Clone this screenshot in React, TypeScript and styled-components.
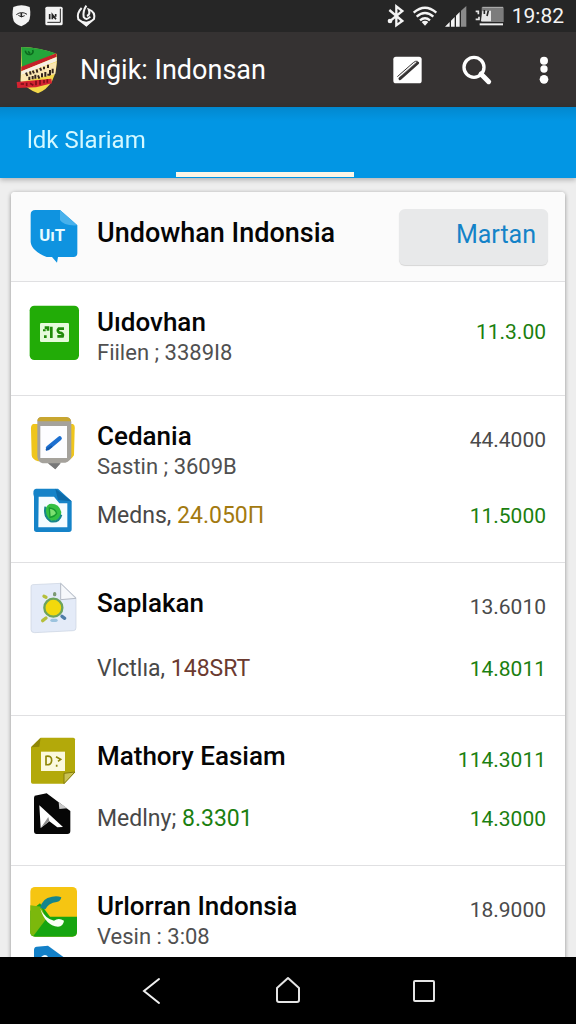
import React from "react";
import styled, { createGlobalStyle } from "styled-components";

const GlobalStyle = createGlobalStyle`
  *, *::before, *::after { box-sizing: border-box; }
  body {
    margin: 0;
    background: #eeeeee;
    font-family: Roboto, "Noto Sans", sans-serif;
    color: #050505;
  }
  button { font: inherit; border: 0; padding: 0; background: none; cursor: pointer; }
  h1, h2, h3, p, ul { margin: 0; padding: 0; }
  svg { display: block; flex: none; overflow: visible; }
`;

const Screen = styled.div`
  display: flex;
  flex-direction: column;
  height: 100vh;
  overflow: hidden;
`;

const StatusBar = styled.div`
  flex: none;
  display: flex;
  justify-content: space-between;
  align-items: center;
  height: 32px;
  padding: 0 12px;
  background: #262626;
  color: #f4f4f4;
`;

const StatusGroup = styled.div<{ $gap: number }>`
  display: flex;
  align-items: center;
  gap: ${(p) => p.$gap}px;
`;

const Clock = styled.time`
  font-size: 21px;
  line-height: 32px;
`;

const AppBar = styled.header`
  flex: none;
  display: flex;
  align-items: center;
  height: 75px;
  padding-left: 16px;
  background: #353232;
  color: #ffffff;
`;

const AppTitle = styled.h1`
  flex: 1;
  margin-left: 22px;
  font-size: 27px;
  font-weight: 400;
  line-height: 32px;
  white-space: nowrap;
`;

const Actions = styled.div`
  display: flex;
  align-items: center;
`;

const IconButton = styled.button<{ $width?: number }>`
  display: flex;
  justify-content: center;
  align-items: center;
  width: ${(p) => p.$width ?? 70}px;
  height: 48px;
`;

const TabBar = styled.nav`
  flex: none;
  position: relative;
  display: grid;
  grid-template-columns: 176px 178px 1fr;
  height: 71px;
  padding-bottom: 1px;
  background: linear-gradient(#0288cf, #0296e4 14px);
  box-shadow: 0 2px 5px rgba(0, 0, 0, 0.25);
`;

const Tab = styled.a<{ $active?: boolean }>`
  padding: 17px 0 0 27px;
  border-bottom: 5px solid ${(p) => (p.$active ? "#fdf6e6" : "transparent")};
  color: #d3f8ff;
  font-size: 24px;
  line-height: 32px;
  text-decoration: none;
  white-space: nowrap;
`;

const Content = styled.main`
  flex: 1;
  min-height: 0;
  padding: 14px 11px;
  overflow-y: auto;
  scrollbar-width: none;
  background: #eeeeee;
`;

const Card = styled.section`
  border-radius: 4px;
  background: #ffffff;
  box-shadow: 0 1px 4px rgba(0, 0, 0, 0.4);
`;

const CardHeader = styled.div`
  display: flex;
  align-items: center;
  gap: 17px;
  height: 89px;
  padding: 0 17px 0 19px;
  border-radius: 4px 4px 0 0;
  background: #fbfbfb;
`;

const CardTitle = styled.h2`
  flex: 1;
  padding-bottom: 8px;
  font-size: 27px;
  font-weight: 500;
  line-height: 32px;
  white-space: nowrap;
`;

const ActionButton = styled.button`
  && {
    width: 149px;
    height: 56px;
    padding: 0 12px 4px;
    border-radius: 6px;
    background: #e8e9ea;
    box-shadow: 0 1px 1px rgba(0, 0, 0, 0.15);
    color: #1483c8;
    font-size: 25px;
    text-align: right;
  }
`;

const List = styled.ul`
  list-style: none;
`;

const Row = styled.li`
  padding: 20px 19px 24px;
  border-top: 1px solid #e0e0e2;
`;

const Entry = styled.div<{ $height: number }>`
  display: flex;
  align-items: flex-start;
  gap: 17px;
  height: ${(p) => p.$height}px;
`;

const Names = styled.div`
  flex: 1;
  padding-top: 4px;
  white-space: nowrap;
`;

const Name = styled.h3`
  font-size: 26px;
  font-weight: 500;
  line-height: 32px;
`;

const Caption = styled.p`
  color: #505050;
  font-size: 22px;
  line-height: 30px;
`;

const Detail = styled.p`
  flex: 1;
  color: #484848;
  font-size: 23px;
  line-height: 48px;
  white-space: nowrap;
`;

const Amount = styled.span<{ $color: string }>`
  color: ${(p) => p.$color};
`;

const Value = styled.span<{ $color: string; $line?: number }>`
  color: ${(p) => p.$color};
  font-size: 21px;
  line-height: ${(p) => p.$line ?? 48}px;
`;

const Blank = styled.span`
  width: 50px;
`;

const SystemNav = styled.nav`
  flex: none;
  display: flex;
  justify-content: center;
  align-items: center;
  height: 67px;
  background: #000000;
`;

const GREEN = "#1b7f10";
const GREY = "#4a4a4a";

const glyph = { fontFamily: "Roboto, sans-serif", fontWeight: 700 };

const ShieldIcon = () => (
  <svg width="19" height="22" viewBox="0 0 57 66" aria-hidden="true">
    <path d="M4 6Q28-5 53 6Q58 35 50 49Q42 59 28 64Q10 58 5 48Q-1 30 4 6Z" fill="#f4f4f4" />
    <path d="M13 29Q28 17 45 28M19 31Q28 40 38 32" fill="none" stroke="#262626" strokeWidth="3" />
    <path d="M28 24V36" stroke="#262626" strokeWidth="5" />
  </svg>
);

const ChartBoxIcon = () => (
  <svg width="18" height="20" viewBox="0 0 54 60" aria-hidden="true">
    <rect x="1" y="2" width="52" height="56" rx="5" fill="#f4f4f4" />
    <path d="M7 49H46V8" fill="none" stroke="#262626" strokeWidth="3" />
    <path d="M14 24V40M22 40V26L33 40M32 24V32" stroke="#262626" strokeWidth="5" fill="none" />
  </svg>
);

const FlameIcon = () => (
  <svg width="18" height="22" viewBox="0 0 54 66" aria-hidden="true">
    <path d="M14 9Q-2 25 4 43L28 61L51 42Q56 20 35 13Q41 28 30 33" fill="none" stroke="#f4f4f4" strokeWidth="6" />
    <path d="M28 2Q17 18 20 36Q27 48 40 35" fill="none" stroke="#f4f4f4" strokeWidth="6" />
    <path d="M8 46L28 50L48 44L28 65Z" fill="#f4f4f4" />
  </svg>
);

const BluetoothIcon = () => (
  <svg width="18" height="22" viewBox="0 0 54 66" aria-hidden="true">
    <path d="M7 15L46 48L28 61V4L46 18L8 49" fill="none" stroke="#f4f4f4" strokeWidth="7" />
    <circle cx="9" cy="48" r="7" fill="#f4f4f4" />
  </svg>
);

const WifiIcon = () => (
  <svg width="24" height="19" viewBox="0 0 72 57" aria-hidden="true">
    <path d="M2 17Q36-13 70 17M11 29Q36 7 61 29M21 40Q36 27 51 40" fill="none" stroke="#f4f4f4" strokeWidth="7" />
    <path d="M26 45Q36 38 46 45L36 56Z" fill="#f4f4f4" />
  </svg>
);

const SignalIcon = () => (
  <svg width="22" height="21" viewBox="0 0 66 63" aria-hidden="true">
    <path d="M0 62L14 48V62ZM18 44L29 33V62H18ZM33 29L44 18V62H33Z" fill="#f4f4f4" />
    <path d="M48 14L64 0V62H48Z" fill="#8a8a8a" />
  </svg>
);

const BatteryIcon = () => (
  <svg width="29" height="20" viewBox="0 0 87 60" aria-hidden="true">
    <rect x="20" y="4" width="66" height="44" fill="#7c7c7c" />
    <path d="M14 55H84" stroke="#f0f0f0" strokeWidth="6" />
    <path d="M22 4H84" stroke="#b8b8b8" strokeWidth="3" />
    <path d="M2 16H10V25M2 40H12V32" fill="none" stroke="#e6e6e6" strokeWidth="5" />
    <path d="M22 14H48V46H18Z" fill="#e6e6e6" />
    <path d="M28 12V24M40 14L36 30" stroke="#262626" strokeWidth="5" />
  </svg>
);

const AppLogo = () => (
  <svg width="42" height="48" viewBox="0 0 126 144" aria-hidden="true">
    <path d="M16 3Q70 4 122 24Q126 70 108 106Q92 132 66 142Q34 130 14 104Z" fill="#f3d84a" />
    <path d="M16 3Q70 4 119 22L18 72Z" fill="#24a53a" />
    <path d="M28 14Q30 28 44 25Q54 22 50 12M36 16L42 22" fill="none" stroke="#0c6a1e" strokeWidth="5" />
    <path d="M16 62L121 22V33L16 76Z" fill="#c4202a" />
    <path d="M16 76L122 33V46L15 88Z" fill="#f7efe4" />
    <path d="M15 88L122 47L118 84L14 108Z" fill="#fbe7b2" />
    <path d="M2 108L106 98L108 112L60 124L4 126Z" fill="#d42331" />
    <path d="M30 80L34 90M42 76L44 86M50 74L54 82M62 70L64 80M72 66L76 74M84 62V70M96 56V66" stroke="#33241c" strokeWidth="6" fill="none" />
    <path d="M40 92V102M50 90V100M58 86V98M66 88L70 98M78 82V94M88 78V92M94 86H102M102 72V88M110 68V82" stroke="#33241c" strokeWidth="6" fill="none" />
    <path d="M14 114H24M32 110V120M42 112L52 118M60 104V118M72 102V116M84 102V112M94 100V110" stroke="#7c0f18" strokeWidth="5" fill="none" />
  </svg>
);

const EditIcon = () => (
  <svg width="29" height="28" viewBox="0 0 87 84" aria-hidden="true">
    <rect x="1" y="2" width="85" height="80" rx="8" fill="#ffffff" />
    <path d="M21 68L74 21" stroke="#353232" strokeWidth="9" strokeLinecap="round" />
    <path d="M13 62L62 19Q68 14 74 16" stroke="#353232" strokeWidth="3" fill="none" />
    <path d="M26 58L68 21" stroke="#a5a3a3" strokeWidth="2" />
  </svg>
);

const SearchIcon = () => (
  <svg width="30" height="30" viewBox="0 0 90 90" aria-hidden="true">
    <circle cx="36" cy="37" r="30" fill="none" stroke="#ffffff" strokeWidth="10" />
    <path d="M57 57L80 80" stroke="#ffffff" strokeWidth="15" strokeLinecap="round" />
  </svg>
);

const MoreIcon = () => (
  <svg width="10" height="28" viewBox="0 0 30 84" fill="#ffffff" aria-hidden="true">
    <circle cx="15" cy="14" r="12" />
    <circle cx="15" cy="39" r="11" />
    <circle cx="15" cy="70" r="13" />
  </svg>
);

const BubbleIcon = () => (
  <svg width="50" height="54" viewBox="0 0 150 162" aria-hidden="true">
    <path d="M16 0H90L142 46V130Q142 141 130 141H84L81 158L66 141H50Q4 122 2 96V14Q2 0 16 0Z" fill="#0f93e0" />
    <path d="M90 0L142 46Q100 48 90 30Z" fill="#48b1ec" />
    <text x="28" y="93" fontSize="50" fill="#e8fbff" style={glyph}>UıT</text>
  </svg>
);

const GreenFileIcon = () => (
  <svg width="50" height="60" viewBox="0 0 150 180" aria-hidden="true">
    <rect x="-1" y="11" width="148" height="163" rx="14" fill="#22ac07" />
    <rect x="30" y="63" width="87" height="57" rx="4" fill="#e6fbdc" />
    <path d="M44 77H54V86M43 82V88M46 100V108M64 74V108M102 80H86Q80 86 88 92Q102 94 98 103H82" fill="none" stroke="#1f8a08" strokeWidth="8" />
  </svg>
);

const TabletIcon = () => (
  <svg width="50" height="54" viewBox="0 0 150 162" aria-hidden="true">
    <path d="M10 24H128Q136 26 134 42L132 118Q122 134 104 136H24Q6 130 5 118L3 40Q2 26 10 24Z" fill="#efc51c" />
    <path d="M32 3H110Q122 4 124 18V122Q122 134 106 140H92L76 160L54 142H38Q24 138 22 122V18Q22 4 32 3Z" fill="#a5a29c" />
    <path d="M34 3H108Q122 4 123 16H22Q22 4 34 3Z" fill="#c8a630" />
    <path d="M54 142H92L76 160Z" fill="#777778" />
    <rect x="31" y="30" width="80" height="96" fill="#fdfdff" />
    <path d="M54 96L89 67" stroke="#1c6fd0" strokeWidth="13" strokeLinecap="round" />
    <path d="M50 101L64 92" stroke="#1559ac" strokeWidth="6" strokeLinecap="round" />
  </svg>
);

const BlueFileIcon = () => (
  <svg width="50" height="46" viewBox="0 0 150 138" aria-hidden="true">
    <path d="M18-10H84L125 28V112Q125 120 117 120H20Q12 120 12 112V14Q6-8 18-10Z" fill="#1583c8" />
    <path d="M26 14H72L88 34H112V106H25Z" fill="#f4fcff" />
    <path d="M76-10L125 28L84 24Z" fill="#0d6aa8" />
    <path d="M58 36Q86 32 94 60Q94 82 72 88Q44 84 44 62Q46 44 58 36Z" fill="#34c043" />
    <path d="M46 44Q40 74 62 88Q88 92 94 68" fill="none" stroke="#17868a" strokeWidth="6" />
    <path d="M58 48Q76 50 80 64Q74 74 60 76Z" fill="#7de070" stroke="#169a30" strokeWidth="4" />
  </svg>
);

const SunFileIcon = () => (
  <svg width="50" height="54" viewBox="0 0 150 162" aria-hidden="true">
    <path d="M8 5L92 1L138 44V134Q138 143 130 143L14 149Q3 149 3 140V12Q3 5 8 5Z" fill="#e4ebf8" stroke="#c9d2e0" strokeWidth="2" />
    <path d="M92 1L138 46L92 50Z" fill="#f6f8fb" stroke="#b4bac4" strokeWidth="3" />
    <circle cx="70" cy="74" r="27" fill="#f2d90c" stroke="#6da35c" strokeWidth="7" />
    <g strokeLinecap="round" strokeWidth="10" fill="none">
      <path d="M42 40L48 43M38 113L48 105" stroke="#b5bf3c" />
      <path d="M74 32V35" stroke="#7c9a74" />
      <path d="M96 100L104 106" stroke="#4f7da8" />
      <path d="M66 112H78" stroke="#9cc3de" />
    </g>
  </svg>
);

const OliveNoteIcon = () => (
  <svg width="50" height="54" viewBox="0 0 150 162" aria-hidden="true">
    <path d="M32 5H130Q135 5 135 10V108L102 143H8Q3 143 3 138V34Z" fill="#b3a90a" />
    <path d="M32 5L28 32L3 34Z" fill="#8f8708" />
    <path d="M135 108L102 143V112Z" fill="#c9c254" stroke="#857d08" strokeWidth="3" />
    <rect x="33" y="47" width="72" height="58" fill="#fbf9dd" />
    <path d="M48 61Q66 58 65 74Q64 88 48 86ZM78 62L92 70L84 76M80 86V92M92 80" fill="none" stroke="#8f8708" strokeWidth="5" />
  </svg>
);

const BlackNoteIcon = () => (
  <svg width="50" height="46" viewBox="0 0 150 138" aria-hidden="true">
    <path d="M14 2L50-5L86 22L121 48V108Q121 117 112 117H20Q12 117 12 108V8Z" fill="#060606" />
    <path d="M86 22L112 40L88 42Z" fill="#c9c9c9" />
    <path d="M28 31L99 96L82 97L58 79L32 99Z" fill="#ffffff" />
    <path d="M32 99L58 79L55 66Z" fill="#8e8e8e" />
  </svg>
);

const PhoneIcon = () => (
  <svg width="50" height="54" viewBox="0 0 150 162" aria-hidden="true">
    <rect x="1" y="3" width="140" height="149" rx="14" fill="#f6c512" />
    <path d="M1 74L30 52L60 92H141V138Q141 152 127 152H15Q1 152 1 138Z" fill="#16a510" />
    <path d="M1 58L34 62L48 100L10 150Q1 148 1 138Z" fill="#7cb80c" />
    <path d="M31 66Q36 36 66 32Q82 28 94 34Q92 46 80 48Q56 50 46 70Z" fill="#15858c" />
    <path d="M31 68Q46 98 72 104Q86 94 102 104Q100 120 84 122Q46 118 31 68Z" fill="#f8fff4" />
  </svg>
);

const BlueTagIcon = () => (
  <svg width="50" height="46" viewBox="0 0 150 138" aria-hidden="true">
    <path d="M20 8L54 5L121 54V108Q121 117 112 117H20Q12 117 12 108V18Q12 9 20 8Z" fill="#1380c8" />
    <path d="M34 60V38Q54 22 62 60Z" fill="#f4fcff" />
  </svg>
);

const BackIcon = () => (
  <svg width="18" height="28" viewBox="0 0 18 28" fill="none" stroke="#efefef" strokeWidth="2" strokeLinecap="round" aria-hidden="true">
    <path d="M16 2L1 14L16 26" />
  </svg>
);

const HomeIcon = () => (
  <svg width="26" height="28" viewBox="0 0 26 28" fill="none" stroke="#e4e4e4" strokeWidth="2" strokeLinejoin="round" aria-hidden="true">
    <path d="M2 11L13 1L24 11V23Q24 25 22 25H4Q2 25 2 23Z" />
  </svg>
);

const RecentIcon = () => (
  <svg width="22" height="22" viewBox="0 0 22 22" fill="none" stroke="#e4e4e4" strokeWidth="2" aria-hidden="true">
    <rect x="1" y="1" width="20" height="20" rx="1" />
  </svg>
);

type Item = {
  icon: React.ReactNode;
  name: string;
  caption?: string;
  value: string;
  valueColor: string;
  valueLine?: number;
  height: number;
  detail?: {
    icon?: React.ReactNode;
    label?: string;
    amount?: string;
    amountColor?: string;
    value?: string;
  };
};

const items: Item[] = [
  {
    icon: <GreenFileIcon />, name: "Uıdovhan", caption: "Fiilen ; 3389I8",
    value: "11.3.00", valueColor: GREEN, valueLine: 60, height: 69,
  },
  {
    icon: <TabletIcon />, name: "Cedania", caption: "Sastin ; 3609B",
    value: "44.4000", valueColor: GREY, height: 76,
    detail: { icon: <BlueFileIcon />, label: "Medns,", amount: "24.050П", amountColor: "#a37a10", value: "11.5000" },
  },
  {
    icon: <SunFileIcon />, name: "Saplakan", value: "13.6010", valueColor: GREY, height: 62,
    detail: { label: "Vlctlıa,", amount: "148SRT", amountColor: "#6b3a30", value: "14.8011" },
  },
  {
    icon: <OliveNoteIcon />, name: "Mathory Easiam", value: "114.3011", valueColor: GREEN, height: 59,
    detail: { icon: <BlackNoteIcon />, label: "Medlny;", amount: "8.3301", amountColor: GREEN, value: "14.3000" },
  },
  {
    icon: <PhoneIcon />, name: "Urlorran Indonsia", caption: "Vesin : 3:08",
    value: "18.9000", valueColor: GREY, height: 58,
    detail: { icon: <BlueTagIcon /> },
  },
];

export default function App() {
  return (
    <Screen>
      <GlobalStyle />
      <StatusBar>
        <StatusGroup $gap={14}>
          <ShieldIcon />
          <ChartBoxIcon />
          <FlameIcon />
        </StatusGroup>
        <StatusGroup $gap={8}>
          <BluetoothIcon />
          <WifiIcon />
          <SignalIcon />
          <BatteryIcon />
          <Clock>19:82</Clock>
        </StatusGroup>
      </StatusBar>

      <AppBar>
        <AppLogo />
        <AppTitle>Nıġik: Indonsan</AppTitle>
        <Actions>
          <IconButton aria-label="Edit"><EditIcon /></IconButton>
          <IconButton aria-label="Search"><SearchIcon /></IconButton>
          <IconButton aria-label="More options" $width={64}><MoreIcon /></IconButton>
        </Actions>
      </AppBar>

      <TabBar>
        <Tab href="#first">ldk Slariam</Tab>
        <Tab href="#second" $active aria-current="page" aria-label="Second tab" />
      </TabBar>

      <Content>
        <Card>
          <CardHeader>
            <BubbleIcon />
            <CardTitle>Undowhan Indonsia</CardTitle>
            <ActionButton>Martan</ActionButton>
          </CardHeader>
          <List>
            {items.map((item) => (
              <Row key={item.name}>
                <Entry $height={item.height}>
                  {item.icon}
                  <Names>
                    <Name>{item.name}</Name>
                    {item.caption && <Caption>{item.caption}</Caption>}
                  </Names>
                  <Value $color={item.valueColor} $line={item.valueLine}>{item.value}</Value>
                </Entry>
                {item.detail && (
                  <Entry $height={46}>
                    {item.detail.icon ?? <Blank />}
                    {item.detail.label && (
                      <Detail>
                        {item.detail.label} <Amount $color={item.detail.amountColor ?? GREY}>{item.detail.amount}</Amount>
                      </Detail>
                    )}
                    {item.detail.value && <Value $color={GREEN}>{item.detail.value}</Value>}
                  </Entry>
                )}
              </Row>
            ))}
          </List>
        </Card>
      </Content>

      <SystemNav>
        <IconButton aria-label="Back" $width={136}><BackIcon /></IconButton>
        <IconButton aria-label="Home" $width={136}><HomeIcon /></IconButton>
        <IconButton aria-label="Recent apps" $width={136}><RecentIcon /></IconButton>
      </SystemNav>
    </Screen>
  );
}
